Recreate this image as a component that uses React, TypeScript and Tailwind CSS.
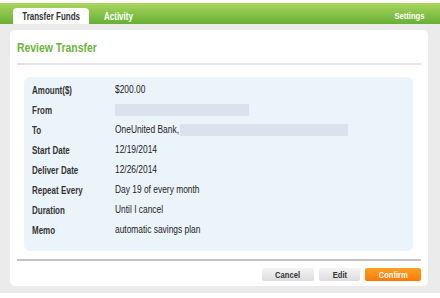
const rows: { label: string; value?: string; bar?: { prefix?: string; width: number } }[] = [
  { label: 'Amount($)', value: '$200.00' },
  { label: 'From', bar: { width: 134 } },
  { label: 'To', bar: { prefix: 'OneUnited Bank,', width: 168 } },
  { label: 'Start Date', value: '12/19/2014' },
  { label: 'Deliver Date', value: '12/26/2014' },
  { label: 'Repeat Every', value: 'Day 19 of every month' },
  { label: 'Duration', value: 'Until I cancel' },
  { label: 'Memo', value: 'automatic savings plan' },
];

// the old page renders its type narrow, so squeeze text horizontally
function Narrow({ children, origin = 'origin-left' }: { children: React.ReactNode; origin?: string }) {
  return <span className={`inline-block whitespace-nowrap scale-x-[0.8] ${origin}`}>{children}</span>;
}

export default function App() {
  const btn =
    'h-[13px] rounded-[2px] text-[9.5px] font-bold leading-[13px] flex items-center justify-center';

  return (
    <div
      className="w-[440px] h-[298px] bg-white pt-[3px] text-[#222]"
      style={{ fontFamily: '"Liberation Sans", Arial, sans-serif' }}
    >
      {/* nav bar */}
      <div className="h-[21px] bg-gradient-to-b from-[#a9d65e] to-[#66b034] flex items-end pl-[13px] pr-[16px]">
        <div className="h-[16px] w-[76px] rounded-t-[4px] bg-white flex items-center justify-center text-[10px] font-bold text-[#333]">
          <Narrow origin="origin-center">Transfer Funds</Narrow>
        </div>
        <div className="h-[16px] ml-[15px] flex items-center text-[10px] font-bold text-white">
          <Narrow>Activity</Narrow>
        </div>
        <div className="h-[16px] ml-auto flex items-center text-[9.5px] font-bold text-white">
          <Narrow origin="origin-right">Settings</Narrow>
        </div>
      </div>

      <div className="h-[269px] bg-[#ebebeb] pt-[6px] pl-[10px] pr-[12px]">
        <div className="h-[256px] rounded-[5px] bg-white px-[7px] flex flex-col">
          <div className="pt-[11px] h-[33px] text-[13px] font-bold text-[#6cb33f] leading-[14px]">
            <Narrow>Review Transfer</Narrow>
          </div>
          <div className="h-[2px] bg-[#e4e4e4]" />

          <div className="ml-[7px] mr-[8px] mt-[12px] h-[174px] rounded-[6px] bg-[#ecf4fb] pt-[3px]">
            {rows.map((r) => (
              <div key={r.label} className="h-[20px] flex items-center text-[10.5px]">
                <div className="w-[91px] pl-[8px] text-[10px] font-bold text-[#333]">
                  <Narrow>{r.label}</Narrow>
                </div>
                {r.value && (
                  <div className="text-[#222]">
                    <Narrow>{r.value}</Narrow>
                  </div>
                )}
                {r.bar && (
                  <div className="flex items-center">
                    {r.bar.prefix && (
                      <span className="w-[65px] text-[#222]">
                        <Narrow>{r.bar.prefix}</Narrow>
                      </span>
                    )}
                    <div className="h-[12px] bg-[#d9e3ef]" style={{ width: r.bar.width }} />
                  </div>
                )}
              </div>
            ))}
          </div>

          <div className="mt-[8px] h-[2px] bg-[#c4c4c4]" />

          <div className="mt-[7px] flex justify-end gap-[5px]">
            <div className={`${btn} w-[52px] bg-gradient-to-b from-[#f4f4f4] to-[#dcdcdc] text-[#333]`}>
              <Narrow origin="origin-center">Cancel</Narrow>
            </div>
            <div className={`${btn} w-[41px] bg-gradient-to-b from-[#f4f4f4] to-[#dcdcdc] text-[#333]`}>
              <Narrow origin="origin-center">Edit</Narrow>
            </div>
            <div className={`${btn} w-[56px] bg-gradient-to-b from-[#ffa020] to-[#ff7800] text-white`}>
              <Narrow origin="origin-center">Confirm</Narrow>
            </div>
          </div>
        </div>
      </div>
    </div>
  );
}
